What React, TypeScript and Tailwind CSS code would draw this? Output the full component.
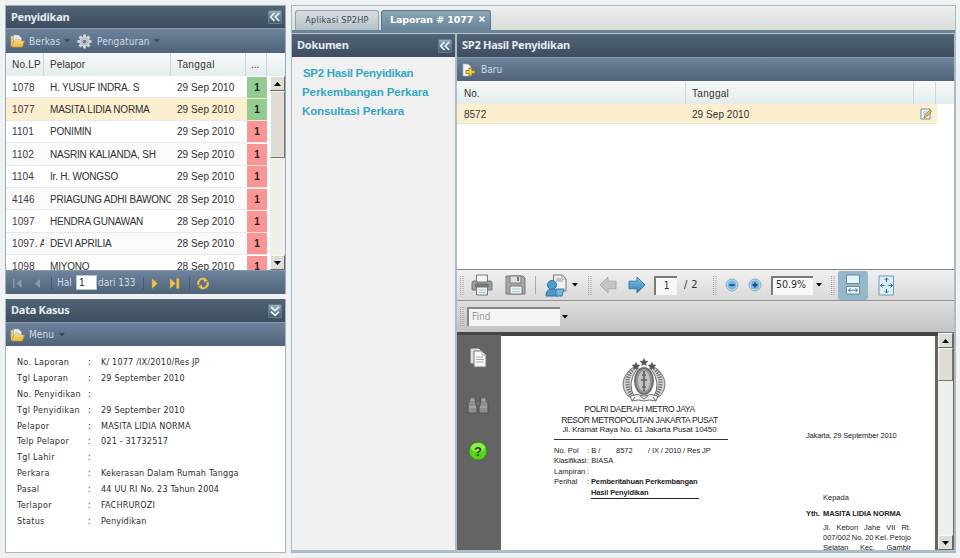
import React from "react";

const sans = "font-['Liberation_Sans',Arial,sans-serif]";
const tahoma = "font-['DejaVu_Sans_Condensed','DejaVu_Sans',sans-serif]";
const title = "font-['Noto_Sans',sans-serif]";

const reports = [
  ["1078", "H. YUSUF INDRA. S", "29 Sep 2010"],
  ["1077", "MASITA LIDIA NORMA", "29 Sep 2010"],
  ["1101", "PONIMIN", "29 Sep 2010"],
  ["1102", "NASRIN KALIANDA, SH", "29 Sep 2010"],
  ["1104", "Ir. H. WONGSO", "29 Sep 2010"],
  ["4146", "PRIAGUNG ADHI BAWONO", "28 Sep 2010"],
  ["1097", "HENDRA GUNAWAN", "28 Sep 2010"],
  ["1097. A", "DEVI APRILIA", "28 Sep 2010"],
  ["1098", "MIYONO", "28 Sep 2010"],
];

const details = [
  ["No. Laporan", "K/ 1077 /IX/2010/Res JP"],
  ["Tgl Laporan", "29 September 2010"],
  ["No. Penyidikan", ""],
  ["Tgl Penyidikan", "29 September 2010"],
  ["Pelapor", "MASITA LIDIA NORMA"],
  ["Telp Pelapor", "021 - 31732517"],
  ["Tgl Lahir", ""],
  ["Perkara", "Kekerasan Dalam Rumah Tangga"],
  ["Pasal", "44 UU RI No. 23 Tahun 2004"],
  ["Terlapor", "FACHRUROZI"],
  ["Status", "Penyidikan"],
];

function Folder() {
  return (
    <svg width="15" height="14" viewBox="0 0 15 14" className="shrink-0">
      <path d="M1 2h5l1 1.500V12H1z" fill="#f1d27c" stroke="#c9a24c" strokeWidth=".6" />
      <path d="M3.500 1h5l3 3v7h-8z" fill="#f4f4f2" stroke="#9b9a95" strokeWidth=".7" />
      <path d="M5 4h4M5 5.500h5" stroke="#b0b4b8" strokeWidth=".7" />
      <path d="M3.800 7h10.700L12.300 13H1.800z" fill="#f6c34a" stroke="#cc8e22" strokeWidth=".7" />
      <path d="M4.600 8h8.500" stroke="#fdeaa5" />
    </svg>
  );
}

function Gear() {
  return (
    <svg width="15" height="15" viewBox="-8 -8 16 16" className="shrink-0">
      <g fill="#d3d6d8">
        {[0, 45, 90, 135].map((a) => (
          <rect key={a} x="-1.600" y="-7.500" width="3.200" height="15" rx=".6" transform={`rotate(${a})`} />
        ))}
        <circle r="5.300" />
      </g>
      <circle r="3.600" fill="none" stroke="#aeb3b6" />
      <circle r="2" fill="#64788f" />
    </svg>
  );
}

function Caret({ className = "" }: { className?: string }) {
  return (
    <svg width="6" height="4" viewBox="0 0 6 4" className={`shrink-0 ${className}`}>
      <path d="M0 0h6L3 3.500z" fill="currentColor" />
    </svg>
  );
}

function Tool({ down = false }: { down?: boolean }) {
  return (
    <svg width="14" height="14" viewBox="0 0 13 13" className="shrink-0">
      <defs>
        <linearGradient id="toolg" x2="0" y2="1">
          <stop stopColor="#9ab0c0" />
          <stop offset="1" stopColor="#3c566c" />
        </linearGradient>
      </defs>
      <rect x=".5" y=".5" width="12" height="12" rx="1" fill="url(#toolg)" stroke="#5f7c94" />
      <g transform={down ? "rotate(-90 6.5 6.5)" : undefined} fill="none" stroke="#eef4f6" strokeWidth="1.500">
        <path d="M6 2.800 2.500 6.500 6 10.200M10.300 2.800 6.800 6.500l3.500 3.700" />
      </g>
    </svg>
  );
}

function Header({ text, children, className = "h-[23px]" }: { text: string; children?: React.ReactNode; className?: string }) {
  return (
    <div className={`flex shrink-0 items-center justify-between bg-linear-to-b from-[#526478] to-[#3e4d5f] pr-[3px] pl-[5px] text-[11px] font-bold tracking-[-0.25px] text-[#e6ebf0] ${title} ${className}`}>
      <span className="whitespace-nowrap">{text}</span>
      {children}
    </div>
  );
}

const toolbar = `flex shrink-0 items-center border-t border-[#8499ae] bg-linear-to-b from-[#6e839c] to-[#4f6379] text-[10px] text-[#d3dbe4] whitespace-nowrap ${tahoma}`;
const colHead = "bg-linear-to-b from-[#f7fafa] via-[#eef2f2] to-[#e3ecec]";

function ScrollBtn({ down = false }: { down?: boolean }) {
  return (
    <div className="flex h-[15px] shrink-0 items-center justify-center border border-t-[#f8f8f6] border-r-[#66655f] border-b-[#66655f] border-l-[#f8f8f6] bg-[#dedcd5]">
      <svg width="7" height="4" viewBox="0 0 7 4">
        <path d={down ? "M0 0h7L3.5 4z" : "M0 4h7L3.5 0z"} />
      </svg>
    </div>
  );
}

function Thumb({ className }: { className: string }) {
  return <div className={`shrink-0 border border-t-[#f8f8f6] border-r-[#77766f] border-b-[#77766f] border-l-[#f8f8f6] bg-[#dfddd5] ${className}`} />;
}

function InvestigationPanel() {
  return (
    <section className="flex h-[289px] shrink-0 flex-col border-x border-t border-[#9dacb8]">
      <Header text="Penyidikan" className="h-[22px]"><Tool /></Header>
      <div className={`${toolbar} h-[25px] pl-1`}>
        <Folder />
        <span className="ml-1 w-[35px] tracking-[0.1px]">Berkas</span>
        <Caret className="text-[#354a63]" />
        <span className="w-[7px]" />
        <Gear />
        <span className="ml-[5px] w-[57px] tracking-[0.1px]">Pengaturan</span>
        <Caret className="text-[#354a63]" />
      </div>
      <div className={`flex h-[23px] shrink-0 items-center text-[10px] text-[#333] ${sans} ${colHead}`}>
        <span className="flex h-full w-[38px] items-center border-r border-[#ccd5d6] pl-1.5 tracking-[0.2px]">No.LP</span>
        <span className="flex h-full w-[127px] items-center border-r border-[#ccd5d6] pl-1.5 tracking-[0.1px]">Pelapor</span>
        <span className="flex h-full w-[75px] items-center border-r border-[#ccd5d6] pl-1.5 tracking-[0.4px]">Tanggal</span>
        <span className="flex h-full w-[21px] items-center border-r border-[#ccd5d6] pl-[5px]">...</span>
      </div>
      <div className="flex h-[194px] shrink-0 overflow-hidden bg-white">
        <div className="w-[264px] shrink-0">
          {reports.map(([no, name, date], i) => (
            <div key={no} className={`flex h-[22.400px] w-[261px] items-center border-b border-[#e9e9e9] pt-px text-[10px] whitespace-nowrap text-[#303030] ${sans} ${i === 1 ? "bg-[#fcefcf]" : i % 2 ? "bg-[#fafafa]" : "bg-white"}`}>
              <span className="ml-1.5 w-[32px] shrink-0 overflow-hidden tracking-[0.1px] text-[#423346]">{no}</span>
              <span className="ml-[6px] w-[121px] shrink-0 overflow-hidden tracking-[-0.2px]">{name}</span>
              <span className="ml-[6px] w-[70px] shrink-0 tracking-[0.05px]">{date}</span>
              <span className={`flex h-[21px] w-5 items-center justify-center font-bold text-[#222] ${i < 2 ? "bg-[#93cb91]" : "bg-[#fb9494]"}`}>1</span>
            </div>
          ))}
        </div>
        <div className="flex w-[15px] flex-col bg-[#f0efeb]">
          <ScrollBtn />
          <Thumb className="h-[67px]" />
          <div className="grow" />
          <ScrollBtn down />
        </div>
      </div>
      <div className={`${toolbar} h-6`}>
        <svg width="50" height="22" viewBox="0 0 50 22" className="shrink-0" fill="#8b9bae">
          <path d="M7 7h1.500v9H7zM15.500 7v9l-5-4.500zM34 7v9l-5-4.500z" />
          <path d="M45.500 5v13" stroke="#465a71" />
        </svg>
        <span className="ml-[1px] w-[19px]">Hal</span>
        <span className={`flex h-[15px] w-[21px] items-center border border-[#b9c4cd] bg-white pl-[2px] text-[#222] ${sans}`}>1</span>
        <span className="ml-[1px] w-[38px]">dari 133</span>
        <svg width="74" height="22" viewBox="0 0 74 22" className="shrink-0">
          <path d="M7.500 5v13M53.500 5v13" stroke="#465a71" />
          <path d="M16 6.500v10l5.500-5zM34 6.500v10l5.500-5zM40.500 6.500h2.500v10h-2.500z" fill="#f1c44c" stroke="#c69a2d" strokeWidth=".5" />
          <g transform="translate(67 11.500)" fill="none" stroke="#edbd4b" strokeWidth="2">
            <path d="M-4.500 1.500A4.500 4.500 0 0 1 2-4M4.500-1.500A4.500 4.500 0 0 1-2 4" />
            <path d="M.5-6.500 5-3 1-1zM-.5 6.500-5 3l4-2z" fill="#edbd4b" stroke="none" />
          </g>
        </svg>
      </div>
    </section>
  );
}

function CasePanel() {
  return (
    <section className="flex h-[254px] shrink-0 flex-col border border-t-0 border-[#a9b5bd] bg-white">
      <Header text="Data Kasus"><Tool down /></Header>
      <div className={`${toolbar} h-6 pl-1`}>
        <Folder />
        <span className="ml-1 w-[30px] tracking-[0.1px]">Menu</span>
        <Caret className="text-[#354a63]" />
      </div>
      <div className={`pt-[9px] pl-[11px] text-[9px] leading-[15.900px] whitespace-nowrap text-[#2d2d2d] ${tahoma}`}>
        {details.map(([k, v]) => (
          <div key={k} className="flex h-[15.900px]">
            <span className="w-[71px] tracking-[0.3px]">{k}</span>
            <span className="w-[13px]">:</span>
            <span className="tracking-[0.17px]">{v}</span>
          </div>
        ))}
      </div>
    </section>
  );
}

function Grip({ className = "" }: { className?: string }) {
  return (
    <svg width="4" height="19" viewBox="0 0 4 19" className={`shrink-0 ${className}`}>
      <path d="M.5 0v19M3 0v19" stroke="#9b9b9b" strokeDasharray="1 1" />
    </svg>
  );
}

function Printer() {
  return (
    <svg width="22" height="22" viewBox="0 0 22 22" className="shrink-0" stroke="#737779">
      <path d="M5.500 1h11v7h-11z" fill="#f3f4f4" />
      <path d="M1 9q0-2 2-2h3v2h10V7h3q2 0 2 2v7H1z" fill="#989c9e" />
      <path d="M4 10h14v3H4z" fill="#70777a" stroke="none" />
      <path d="M5.500 13h11v8h-11z" fill="#eef3f5" />
      <path d="M7.500 16h7M7.500 18.500h7" stroke="#adc0c8" />
    </svg>
  );
}

function Disk() {
  return (
    <svg width="21" height="20" viewBox="0 0 21 20" className="shrink-0" stroke="#77797a">
      <path d="M1 1h17l2 2v16H1z" fill="#a5a8aa" />
      <path d="M5 1h11v7H5z" fill="#dfe1e1" />
      <path d="M12 2h2v4h-2z" fill="#777" stroke="none" />
      <path d="M5 11h12v8H5z" fill="#edf5f7" />
      <path d="M7 14h8M7 16.500h8" stroke="#a8c2ce" />
    </svg>
  );
}

function Share() {
  return (
    <svg width="23" height="23" viewBox="0 0 23 23" className="shrink-0">
      <path d="M8.500 1h9l3.500 4v12H8.500z" fill="#eff0f0" stroke="#737577" />
      <path d="M17 1v4h4M11 5h5M11 7h7" fill="none" stroke="#9ba0a3" />
      <circle cx="7" cy="11" r="4.500" fill="#539dcc" stroke="#2c759f" />
      <path d="M1 22q0-7 6-7t6 7z" fill="#4e98c8" stroke="#2c759f" />
      <path d="M11 15h8l-2 7h-6z" fill="#76b7db" stroke="#347ca7" />
    </svg>
  );
}

function Arrow({ left = false }: { left?: boolean }) {
  return (
    <svg width="18" height="18" viewBox="0 0 18 18" className="shrink-0">
      <defs>
        <linearGradient id="arrowb" x2="0" y2="1"><stop stopColor="#8dc9eb" /><stop offset="1" stopColor="#2b7dae" /></linearGradient>
      </defs>
      <path d="M1 5.200h8V1l8 8-8 8v-4.200H1z" transform={left ? "matrix(-1 0 0 1 18 0)" : undefined} fill={left ? "#c5c5c5" : "url(#arrowb)"} stroke={left ? "#adadad" : "#377da5"} />
    </svg>
  );
}

function ZoomIcon({ plus = false }: { plus?: boolean }) {
  return (
    <svg width="14" height="14" viewBox="0 0 14 14" className="shrink-0">
      <circle cx="7" cy="7" r="6" fill="#b8dff0" stroke="#91a8b5" />
      <circle cx="7" cy="7" r="4.500" fill="#75b8dd" />
      <path d={plus ? "M4.500 7h5M7 4.500v5" : "M4.500 7h5"} stroke="#174f80" strokeWidth="1.800" />
    </svg>
  );
}

function PdfToolbar() {
  return (
    <>
      <div className={`flex h-[31px] shrink-0 items-center border-t border-[#858585] bg-linear-to-b from-[#f0f0f0] to-[#d9d9d9] text-[11px] text-[#303030] ${tahoma}`}>
        <Grip className="ml-[3px]" />
        <span className="ml-[7px]"><Printer /></span>
        <span className="ml-3"><Disk /></span>
        <span className="mx-[9px] h-[18px] w-px bg-[#a9a9a9]" />
        <Share />
        <Caret className="ml-[4px] text-black" />
        <Grip className="ml-[10px]" />
        <span className="ml-[7px]"><Arrow left /></span>
        <span className="ml-[11px]"><Arrow /></span>
        <span className="ml-2 flex h-[19px] w-[23px] items-center justify-center border-t-2 border-l-2 border-[#7b7b73] bg-[#f7f7f5] pb-0.5 text-[10px]">1</span>
        <span className="ml-[7px] w-[29px] whitespace-nowrap tracking-[0.4px]">/ 2</span>
        <Grip />
        <span className="ml-[8px]"><ZoomIcon /></span>
        <span className="ml-[9px]"><ZoomIcon plus /></span>
        <span className="ml-[9px] flex h-[19px] w-[42px] items-center border-t-2 border-l-2 border-[#7b7b73] bg-[#f7f7f5] pb-0.5 pl-[3px] text-[10.500px]">50.9%</span>
        <Caret className="ml-[3px] text-black" />
        <Grip className="ml-[9px]" />
        <span className="ml-[3px] flex h-[29px] w-[30px] shrink-0 items-center justify-center rounded-[3px] bg-[#94b7c9]">
          <svg width="18" height="22" viewBox="0 0 18 22" stroke="#668a9f">
            <path d="M2.500 1h13v8.500h-13z" fill="#e5f3f7" />
            <path d="M2.500 12.500h13V20h-13z" fill="#f0f7f8" />
            <path d="M4.500 16.200h9M6.500 14.200l-2 2 2 2M11.500 14.200l2 2-2 2" fill="none" stroke="#397696" />
          </svg>
        </span>
        <svg width="17" height="21" viewBox="0 0 17 21" className="ml-[10px] shrink-0">
          <path d="M1 1h14.500v19H1z" fill="#dceff6" stroke="#6d9db5" />
          <path d="M8.500 3v4M8.500 18v-4M2.500 10.500h4M14.500 10.500h-4M6.500 5l2-2 2 2M6.500 16l2 2 2-2M4.500 8.500l-2 2 2 2M12.500 8.500l2 2-2 2" fill="none" stroke="#2d7297" />
        </svg>
      </div>
      <div className="flex h-8 shrink-0 items-center border-t border-[#929292] bg-linear-to-b from-[#dedede] to-[#c2c2c2]">
        <Grip className="ml-[3px]" />
        <span className={`ml-[3px] flex h-[19px] w-[93px] items-center border-t-2 border-l-2 border-[#87877f] bg-[#f4f4f2] pb-0.5 pl-[3px] text-[10px] text-[#999] ${tahoma}`}>Find</span>
        <Caret className="ml-[2px] text-black" />
      </div>
    </>
  );
}

function Emblem() {
  return (
    <svg width="48" height="46" viewBox="0 0 48 46" className="ml-[66px] block">
      <g fill="none" stroke="#707070">
        <path d="M14 9C3 16-1 28 8 38q4 3 7 2-9-14 2-29z" fill="#cfcfcf" />
        <path d="M34 9c11 7 15 19 6 29q-4 3-7 2 9-14-2-29z" fill="#cfcfcf" />
        <path d="M12 12Q3 24 12 38M36 12q9 12 0 26" strokeWidth="4" strokeDasharray="1.300 1.200" stroke="#777" />
        <ellipse cx="24" cy="23" rx="9" ry="13" fill="#a0a0a0" strokeWidth="2" />
        <ellipse cx="24" cy="23" rx="6.500" ry="10.500" fill="#c4c4c4" strokeDasharray="1 1" />
        <path d="M24 13v20M22 17h4M21 22h6M22 29h4" strokeWidth="2" />
        <path d="M10 38q7-3 14 0 7-3 14 0l-2 5q-7-2-12 0-5-2-12 0z" fill="#ededed" />
        <path d="M15 39l-3 4M33 39l3 4M20 38l4 3 4-3" />
      </g>
      <g fill="#555">
        {[[24, 4.2], [16, 8], [32, 8]].map(([x, y]) => (
          <path key={x} transform={`translate(${x} ${y})`} d="m0-4.200 1.300 2.800 3 .3-2.200 2 .6 3L0 2.400l-2.700 1.500.6-3-2.200-2 3-.3z" />
        ))}
      </g>
    </svg>
  );
}

function LetterPage() {
  return (
    <div className={`flex h-[214px] w-[434px] overflow-hidden bg-white text-[8px] whitespace-nowrap text-[#222] ${sans}`}>
      <div className="ml-[53px] w-[174px] shrink-0 pt-[22px]">
        <Emblem />
        <div className="flex flex-col items-center pr-[3px] text-[8.500px] leading-[10.500px]">
          <span className="tracking-[-0.35px]">POLRI DAERAH METRO JAYA</span>
          <span className="tracking-[-0.37px]">RESOR METROPOLITAN JAKARTA PUSAT</span>
          <span className="text-[8px] tracking-[-0.1px]">Jl. Kramat Raya No. 61 Jakarta Pusat 10450</span>
        </div>
        <div className="mt-[3px] h-px bg-[#333]" />
        <div className="mt-[6px] text-[7.500px] leading-[10.600px]">
          <div className="flex"><span className="w-[33px]">No. Pol</span><span className="w-[29px]">: B /</span><span className="w-8">8572</span><span className="tracking-[-0.1px]">/ IX / 2010 / Res JP</span></div>
          <div className="flex"><span className="w-[33px] tracking-[-0.1px]">Klasifikasi</span><span>: BIASA</span></div>
          <div className="flex"><span className="w-[33px]">Lampiran</span><span>:</span></div>
          <div className="flex"><span className="w-[33px]">Perihal</span><span className="w-1">:</span><b className="tracking-[-0.14px]">Pemberitahuan Perkembangan<br />Hasil Penyidikan</b></div>
          <div className="ml-[37px] h-px w-[108px] bg-[#222]" />
        </div>
      </div>
      <div className="ml-[78px] w-[107px] pt-[94px] text-[7.500px] leading-[11px]">
        <div className="tracking-[-0.16px]">Jakarta, 29 September 2010</div>
        <div className="mt-[51px] ml-[17px]">Kepada</div>
        <div className="mt-[5px] flex font-bold tracking-[-0.1px]"><span className="w-[17px]">Yth.</span><span>MASITA LIDIA NORMA</span></div>
        <div className="mt-[4px] ml-[17px] w-[88px] leading-[10px]">
          <div className="flex justify-between"><span>Jl.</span><span>Kebon</span><span>Jahe</span><span>VII</span><span>Rt.</span></div>
          <div className="flex justify-between"><span>007/002</span><span>No.</span><span>20</span><span>Kel.</span><span>Petojo</span></div>
          <div className="flex justify-between"><span>Selatan</span><span>Kec.</span><span>Gambir</span></div>
        </div>
      </div>
    </div>
  );
}

function PdfView() {
  return (
    <div className="flex h-[218px] shrink-0 bg-[#646464]">
      <div className="flex w-[44px] shrink-0 flex-col items-center border-t-[3px] border-[#454545] pt-3 pr-[3px]">
        <svg width="18" height="21" viewBox="0 0 18 21">
          <path d="M1 1h9l3 3v13H1z" fill="#dedede" stroke="#555" />
          <path d="M5 4h8l4 4v12H5z" fill="#fafafa" stroke="#777" />
          <path d="M13 4v4h4M7 10h7M7 12.500h8M7 15h8" fill="none" stroke="#aaa" />
        </svg>
        <svg width="22" height="19" viewBox="0 0 22 19" className="mt-[27px]" fill="#8e8e8e" stroke="#525252">
          <path d="M3 2h5v4l2 4v8H1V8l2-2zM14 2h5v4l2 2v10h-9v-8l2-4z" />
          <path d="M9 6h4v5H9z" fill="#767676" />
          <path d="M2 12h7M13 12h7M3 5h5M14 5h5" stroke="#b7b7b7" />
        </svg>
        <svg width="20" height="20" viewBox="0 0 20 20" className="mt-[27px]">
          <circle cx="10" cy="10" r="9" fill="#59d11b" stroke="#348d15" />
          <ellipse cx="10" cy="6.500" rx="7" ry="4.500" fill="#93ef4f" />
          <text x="10" y="14.500" textAnchor="middle" fontSize="13" fontWeight="bold" fontFamily="Liberation Sans" fill="#174d12">?</text>
        </svg>
      </div>
      <div className="w-[437px] shrink-0 border-t-4 border-[#454545]">
        <LetterPage />
      </div>
      <div className="flex w-[15px] flex-col border-t border-[#777] bg-[#f0efeb]">
        <ScrollBtn />
        <Thumb className="h-[33px]" />
        <div className="grow" />
        <ScrollBtn down />
      </div>
    </div>
  );
}

function ReportArea() {
  return (
    <main className="flex h-[548px] w-[665px] shrink-0 flex-col border border-[#a9b9c3] bg-[#aebdc6]">
      <div className="flex h-[24px] shrink-0 items-end bg-linear-to-b from-[#eeefef] to-[#d8dcdb] pl-[3px] whitespace-nowrap">
        <div className={`flex h-5 w-[84px] items-center justify-center rounded-t-[3px] border border-b-0 border-[#93a0a9] bg-linear-to-b from-[#d9dfe3] to-[#b4c0c8] text-[9px] tracking-[0.25px] text-[#3b4650] ${tahoma}`}>Aplikasi SP2HP</div>
        <div className="ml-[2px] flex h-5 w-[110px] items-center rounded-t-[3px] border border-b-0 border-[#5c7689] bg-linear-to-b from-[#8da6b7] to-[#688499] pl-[8px] font-['DejaVu_Sans','Verdana',sans-serif] text-[9.500px] font-bold text-white">
          <span className="w-[88px] tracking-[-0.1px]">Laporan # 1077</span>
          <svg width="8" height="8" viewBox="0 0 8 8" className="mb-1 shrink-0"><path d="m1.500 1.500 5 5m0-5-5 5" stroke="white" strokeWidth="1.500" /></svg>
        </div>
      </div>
      <div className="h-[4px] shrink-0 border-t-[3px] border-[#698596] bg-[#b9c9d1]" />
      <div className="flex h-[516px] shrink-0 gap-[2px]">
        <aside className="w-[163px] shrink-0 bg-[#f0f0f1]">
          <Header text="Dokumen"><Tool /></Header>
          <nav className={`flex flex-col pt-[7px] pl-[10px] text-[11.500px] leading-[19px] font-bold whitespace-nowrap text-[#35a8c3] ${sans}`}>
            <a className="ml-px tracking-[-0.3px]">SP2 Hasil Penyidikan</a>
            <a className="tracking-[-0.07px]">Perkembangan Perkara</a>
            <a className="tracking-[-0.12px]">Konsultasi Perkara</a>
          </nav>
        </aside>
        <section className="flex w-[497px] shrink-0 flex-col overflow-hidden bg-white">
          <Header text="SP2 Hasil Penyidikan" />
          <div className={`${toolbar} h-[24px] pl-[5px]`}>
            <svg width="13" height="14" viewBox="0 0 13 14" className="shrink-0">
              <path d="M1 1h5l3 3v9H1z" fill="#f3f6f7" stroke="#a7b2bb" strokeWidth=".6" />
              <path d="M7 5h3v2.500h3v3h-3V13H7v-2.500H4v-3h3z" fill="#f4ce38" stroke="#78602a" strokeWidth=".7" />
            </svg>
            <span className="ml-[6px]">Baru</span>
          </div>
          <div className={`flex h-[23px] shrink-0 pt-px text-[10px] text-[#333] ${sans} ${colHead}`}>
            <span className="flex w-[229px] items-center border-r border-[#ccd5d6] pl-[7px]">No.</span>
            <span className="flex w-[228px] items-center border-r border-[#ccd5d6] pl-[6px] tracking-[0.3px]">Tanggal</span>
            <span className="w-[22px] border-r border-[#ccd5d6]" />
          </div>
          <div className={`flex h-5 w-[480px] shrink-0 items-center border-b border-[#ede4cd] bg-[#fcefcf] pt-px text-[10px] text-[#333] ${sans}`}>
            <span className="w-[235px] pl-[7px]">8572</span>
            <span className="w-[228px] tracking-[0.05px]">29 Sep 2010</span>
            <svg width="12" height="12" viewBox="0 0 12 12">
              <path d="M1 1h9v10H1z" fill="#f5faff" stroke="#7d8790" />
              <path d="M3 4h5M3 6h3" stroke="#9bbbd0" />
              <path d="m4 10 .7-2.500L10 2l1.500 1.500L6.300 9z" fill="#edc254" stroke="#74683b" strokeWidth=".7" />
            </svg>
          </div>
          <div className="h-[145px] shrink-0" />
          <PdfToolbar />
          <PdfView />
        </section>
      </div>
    </main>
  );
}

export default function App() {
  return (
    <div className="flex h-[558px] w-[960px] overflow-hidden bg-[#eff2f3] pt-[5px] pl-[5px]">
      <div className="mr-[5px] flex w-[281px] shrink-0 flex-col gap-[5px]">
        <InvestigationPanel />
        <CasePanel />
      </div>
      <ReportArea />
    </div>
  );
}
